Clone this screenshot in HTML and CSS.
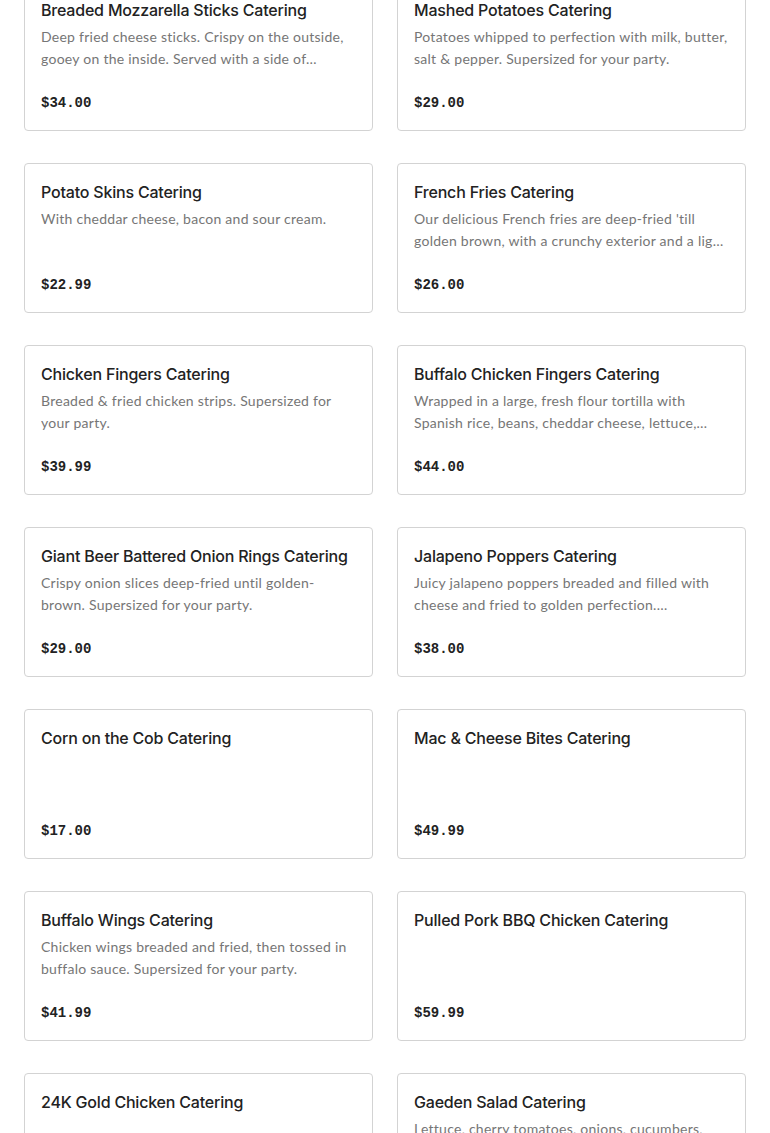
FILE: index.html
```html
<!DOCTYPE html>
<html lang="en">
<head>
<meta charset="utf-8">
<title>Catering Menu</title>
<link rel="stylesheet" href="styles.css">
</head>
<body>
<main class="menu">
  <div class="card"><h3 class="title">Breaded Mozzarella Sticks Catering</h3><p class="desc">Deep fried cheese sticks. Crispy on the outside, gooey on the inside. Served with a side of marinara sauce. Supersized for your party.</p><div class="price">$34.00</div></div>
  <div class="card"><h3 class="title">Mashed Potatoes Catering</h3><p class="desc">Potatoes whipped to perfection with milk, butter, salt &amp; pepper. Supersized for your party.</p><div class="price">$29.00</div></div>
  <div class="card"><h3 class="title">Potato Skins Catering</h3><p class="desc">With cheddar cheese, bacon and sour cream.</p><div class="price">$22.99</div></div>
  <div class="card"><h3 class="title">French Fries Catering</h3><p class="desc">Our delicious French fries are deep-fried 'till golden brown, with a crunchy exterior and a light fluffy interior. Supersized for your party.</p><div class="price">$26.00</div></div>
  <div class="card"><h3 class="title">Chicken Fingers Catering</h3><p class="desc">Breaded &amp; fried chicken strips. Supersized for your party.</p><div class="price">$39.99</div></div>
  <div class="card"><h3 class="title">Buffalo Chicken Fingers Catering</h3><p class="desc">Wrapped in a large, fresh flour tortilla with Spanish rice, beans, cheddar cheese, lettuce, tomatoes and sour cream. Supersized for your party.</p><div class="price">$44.00</div></div>
  <div class="card"><h3 class="title">Giant Beer Battered Onion Rings Catering</h3><p class="desc">Crispy onion slices deep-fried until golden-brown. Supersized for your party.</p><div class="price">$29.00</div></div>
  <div class="card"><h3 class="title">Jalapeno Poppers Catering</h3><p class="desc">Juicy jalapeno poppers breaded and filled with cheese and fried to golden perfection. Supersized for your party.</p><div class="price">$38.00</div></div>
  <div class="card"><h3 class="title">Corn on the Cob Catering</h3><p class="desc"></p><div class="price">$17.00</div></div>
  <div class="card"><h3 class="title">Mac &amp; Cheese Bites Catering</h3><p class="desc"></p><div class="price">$49.99</div></div>
  <div class="card"><h3 class="title">Buffalo Wings Catering</h3><p class="desc">Chicken wings breaded and fried, then tossed in buffalo sauce. Supersized for your party.</p><div class="price">$41.99</div></div>
  <div class="card"><h3 class="title">Pulled Pork BBQ Chicken Catering</h3><p class="desc"></p><div class="price">$59.99</div></div>
  <div class="card"><h3 class="title">24K Gold Chicken Catering</h3><p class="desc"></p><div class="price">$44.99</div></div>
  <div class="card"><h3 class="title">Gaeden Salad Catering</h3><p class="desc">Lettuce, cherry tomatoes, onions, cucumbers, carrots and croutons. Supersized for your party.</p><div class="price">$34.99</div></div>
</main>
</body>
</html>
```
FILE: styles.css
```css
html, body {
  margin: 0;
  padding: 0;
  background: #ffffff;
}
body {
  font-family: "Inter", "Liberation Sans", sans-serif;
  color: #222222;
}
.menu {
  display: grid;
  grid-template-columns: 1fr 1fr;
  column-gap: 24px;
  row-gap: 32px;
  padding: 0 24px;
  margin-top: -19px;
}
.card {
  box-sizing: border-box;
  height: 150px;
  border: 1px solid #d3d3d3;
  border-radius: 4px;
  padding: 16px;
  display: flex;
  flex-direction: column;
  background: #fff;
}
.title {
  margin: 0;
  font-size: 16px;
  line-height: 24px;
  font-weight: 500;
  letter-spacing: -0.2px;
  color: #222;
  white-space: nowrap;
  overflow: hidden;
  text-overflow: ellipsis;
}
.desc {
  margin: 4px 0 0;
  font-family: "Lato", "Liberation Sans", sans-serif;
  font-size: 14px;
  line-height: 22px;
  letter-spacing: 0.26px;
  color: #767676;
  height: 44px;
  overflow: hidden;
  display: -webkit-box;
  -webkit-line-clamp: 2;
  -webkit-box-orient: vertical;
}
.price {
  margin-top: auto;
  font-family: "Liberation Mono", monospace;
  font-weight: 700;
  font-size: 14px;
  line-height: 22px;
  color: #222;
}
```
